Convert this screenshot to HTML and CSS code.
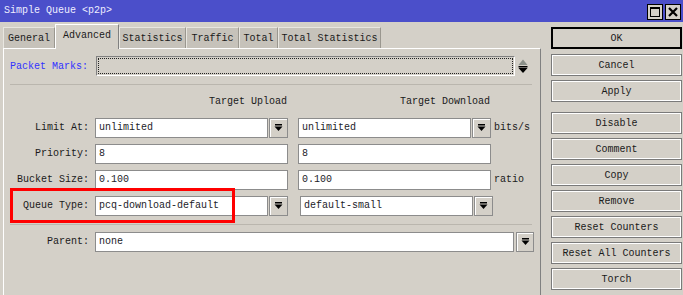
FILE: index.html
```html
<!DOCTYPE html>
<html>
<head>
<meta charset="utf-8">
<link rel="stylesheet" href="styles.css">
</head>
<body>
<div class="window">
  <div class="titlebar">
    <span class="title">Simple Queue &lt;p2p&gt;</span>
    <div class="tb-btns">
      <div class="tb-btn"><svg width="14" height="14" viewBox="0 0 14 14"><rect x="2.5" y="2.5" width="9" height="9" fill="none" stroke="#000" stroke-width="1"/><rect x="2" y="2" width="10" height="2" fill="#000"/></svg></div>
      <div class="tb-btn"><svg width="14" height="14" viewBox="0 0 14 14"><path d="M3 3 L11 11 M11 3 L3 11" stroke="#000" stroke-width="2.2"/></svg></div>
    </div>
  </div>
  <div class="content">
    <div class="main">
      <div class="tabs">
        <div class="tab w-general">General</div>
        <div class="tab active w-advanced">Advanced</div>
        <div class="tab w-stats">Statistics</div>
        <div class="tab w-traffic">Traffic</div>
        <div class="tab w-total">Total</div>
        <div class="tab w-totalstats">Total Statistics</div>
      </div>
      <div class="panel">
        <div class="pm-row">
          <span class="pm-label">Packet Marks:</span>
          <div class="pm-field"><div class="pm-inner"></div></div>
          <svg class="updown" width="10" height="15" viewBox="0 0 10 15"><polygon points="5,0.5 9.5,6 0.5,6" fill="#8a8f88"/><rect x="0.5" y="7" width="9" height="1.5" fill="#000"/><polygon points="0.5,9 9.5,9 5,14" fill="#000"/></svg>
        </div>
        <div class="sep sep1"></div>
        <div class="form">
          <div></div>
          <div class="colhead">Target Upload</div>
          <div class="colhead">Target Download</div>
          <div></div>

          <div class="lbl">Limit At:</div>
          <div class="combo"><div class="inp">unlimited</div><div class="ddbtn"><svg width="9" height="8" viewBox="0 0 9 8"><rect x="1" y="0" width="7" height="1.5" fill="#000"/><polygon points="0.5,2.5 8.5,2.5 4.5,7" fill="#000"/></svg></div></div>
          <div class="combo"><div class="inp">unlimited</div><div class="ddbtn"><svg width="9" height="8" viewBox="0 0 9 8"><rect x="1" y="0" width="7" height="1.5" fill="#000"/><polygon points="0.5,2.5 8.5,2.5 4.5,7" fill="#000"/></svg></div></div>
          <div class="unit">bits/s</div>

          <div class="lbl">Priority:</div>
          <div class="inp full">8</div>
          <div class="inp full">8</div>
          <div></div>

          <div class="lbl">Bucket Size:</div>
          <div class="inp full">0.100</div>
          <div class="inp full">0.100</div>
          <div class="unit">ratio</div>

          <div class="lbl">Queue Type:</div>
          <div class="combo"><div class="inp">pcq-download-default</div><div class="ddbtn"><svg width="9" height="8" viewBox="0 0 9 8"><rect x="1" y="0" width="7" height="1.5" fill="#000"/><polygon points="0.5,2.5 8.5,2.5 4.5,7" fill="#000"/></svg></div></div>
          <div class="combo shift"><div class="inp">default-small</div><div class="ddbtn"><svg width="9" height="8" viewBox="0 0 9 8"><rect x="1" y="0" width="7" height="1.5" fill="#000"/><polygon points="0.5,2.5 8.5,2.5 4.5,7" fill="#000"/></svg></div></div>
          <div></div>
        </div>
        <div class="sep sep2"></div>
        <div class="parent-row">
          <div class="lbl">Parent:</div>
          <div class="inp parent-inp">none</div>
          <div class="ddbtn pbtn"><svg width="9" height="8" viewBox="0 0 9 8"><rect x="1" y="0" width="7" height="1.5" fill="#000"/><polygon points="0.5,2.5 8.5,2.5 4.5,7" fill="#000"/></svg></div>
        </div>
      </div>
    </div>
    <div class="side">
      <div class="btn ok">OK</div>
      <div class="btn">Cancel</div>
      <div class="btn">Apply</div>
      <div class="btn group">Disable</div>
      <div class="btn">Comment</div>
      <div class="btn">Copy</div>
      <div class="btn">Remove</div>
      <div class="btn">Reset Counters</div>
      <div class="btn">Reset All Counters</div>
      <div class="btn">Torch</div>
    </div>
  </div>
  <div class="highlight"></div>
</div>
</body>
</html>
```

FILE: styles.css
```css
* { box-sizing: border-box; }
html, body { margin: 0; padding: 0; }
body {
  background: #d4d0c8;
  font-family: "Liberation Mono", "DejaVu Sans Mono", monospace;
  font-size: 10px;
  color: #1a1a1a;
  width: 683px;
  height: 295px;
  overflow: hidden;
}
.window { position: relative; width: 683px; height: 295px; }
.titlebar {
  height: 22px;
  background: #4b4fca;
  display: flex;
  align-items: center;
  justify-content: space-between;
  padding: 0 2px 0 4px;
}
.title { color: #eef; font-size: 10px; padding-bottom: 1px; }
.tb-btns { display: flex; gap: 2px; margin-top: 1px; }
.tb-btn {
  width: 16px; height: 16px;
  background: #d4d0c8;
  border: 1px solid #000;
  display: flex; align-items: center; justify-content: center;
}
.content { display: flex; height: 273px; }
.main { margin-left: 3px; width: 538px; display: flex; flex-direction: column; }
.tabs { display: flex; height: 25px; align-items: flex-end; margin-top: 1px; }
.tab {
  height: 21px;
  background: #c6c2ba;
  border-top: 1px solid #e8e6e0;
  border-left: 1px solid #e8e6e0;
  border-right: 1px solid #9a978f;
  display: flex; align-items: center; justify-content: center;
  padding-top: 1px;
}
.tab.active {
  height: 25px;
  background: #d4d0c8;
  border-top: 1px solid #fff;
  border-left: 1px solid #fff;
  border-right: 1px solid #808080;
  margin-bottom: -1px;
  padding-bottom: 4px;
  position: relative;
}
.w-general { width: 52px; }
.w-advanced { width: 64px; }
.w-stats { width: 67px; }
.w-traffic { width: 53px; }
.w-total { width: 39px; }
.w-totalstats { width: 103px; }
.panel {
  flex: 1;
  border-top: 1px solid #fff;
  border-left: 1px solid #fff;
  border-right: 1px solid #808080;
}
.pm-row { display: flex; align-items: center; margin-top: 7px; padding-left: 6px; height: 20px; }
.pm-label { color: #3232ff; width: 86px; }
.pm-field {
  width: 419px; height: 20px;
  border: 1px solid #fff;
  border-top-color: #808080; border-left-color: #808080;
  padding: 1px;
}
.pm-inner { width: 100%; height: 100%; border: 1px dotted #222; }
.updown { margin-left: 3px; }
.sep { margin-left: 6px; width: 522px; border-top: 1px solid #bab6ae; }
.sep1 { margin-top: 8px; }
.form {
  display: grid;
  grid-template-columns: 91px 203px 196px auto;
  row-gap: 6px;
  grid-template-rows: 17px repeat(4, 20px);
  margin-top: 10px;
}
.form > .colhead { width: 193px; text-align: right; padding-right: 1px; line-height: 14px; }
.lbl { text-align: right; line-height: 20px; padding-right: 6px; }
.unit { line-height: 20px; }
.combo { display: flex; gap: 1px; height: 20px; width: 193px; }
.combo.shift { margin-left: 2px; }
.inp {
  background: #fff;
  border: 1px solid #8c8c8c;
  height: 20px;
  line-height: 18px;
  padding-left: 3px;
  color: #1c1c28;
  white-space: nowrap;
  overflow: hidden;
}
.inp.full { width: 193px; }
.combo .inp { flex: 1; }
.ddbtn {
  width: 19px; height: 20px;
  background: #d4d0c8;
  border: 1px solid #8c8c8c;
  box-shadow: inset 1px 1px #fff;
  display: flex; align-items: center; justify-content: center;
  flex: none;
}
.sep2 { margin-top: 8px; }
.parent-row { display: flex; margin-top: 7px; height: 20px; }
.parent-row .lbl { width: 91px; }
.parent-inp { width: 419px; }
.pbtn { width: 18px; margin-left: 2px; }
.side { margin-left: 10px; width: 131px; padding-top: 5px; display: flex; flex-direction: column; gap: 4px; }
.btn {
  height: 22px;
  border: 1px solid #7a7a7a;
  box-shadow: inset 0 0 0 1px #fff;
  display: flex; align-items: center; justify-content: center;
}
.btn.ok { border: 2px solid #000; box-shadow: none; height: 22px; margin-bottom: 1px; }
.btn.group { margin-top: 6px; }
.highlight {
  position: absolute;
  left: 10px; top: 188px;
  width: 225px; height: 35px;
  border: 3px solid #f00;
}
```
